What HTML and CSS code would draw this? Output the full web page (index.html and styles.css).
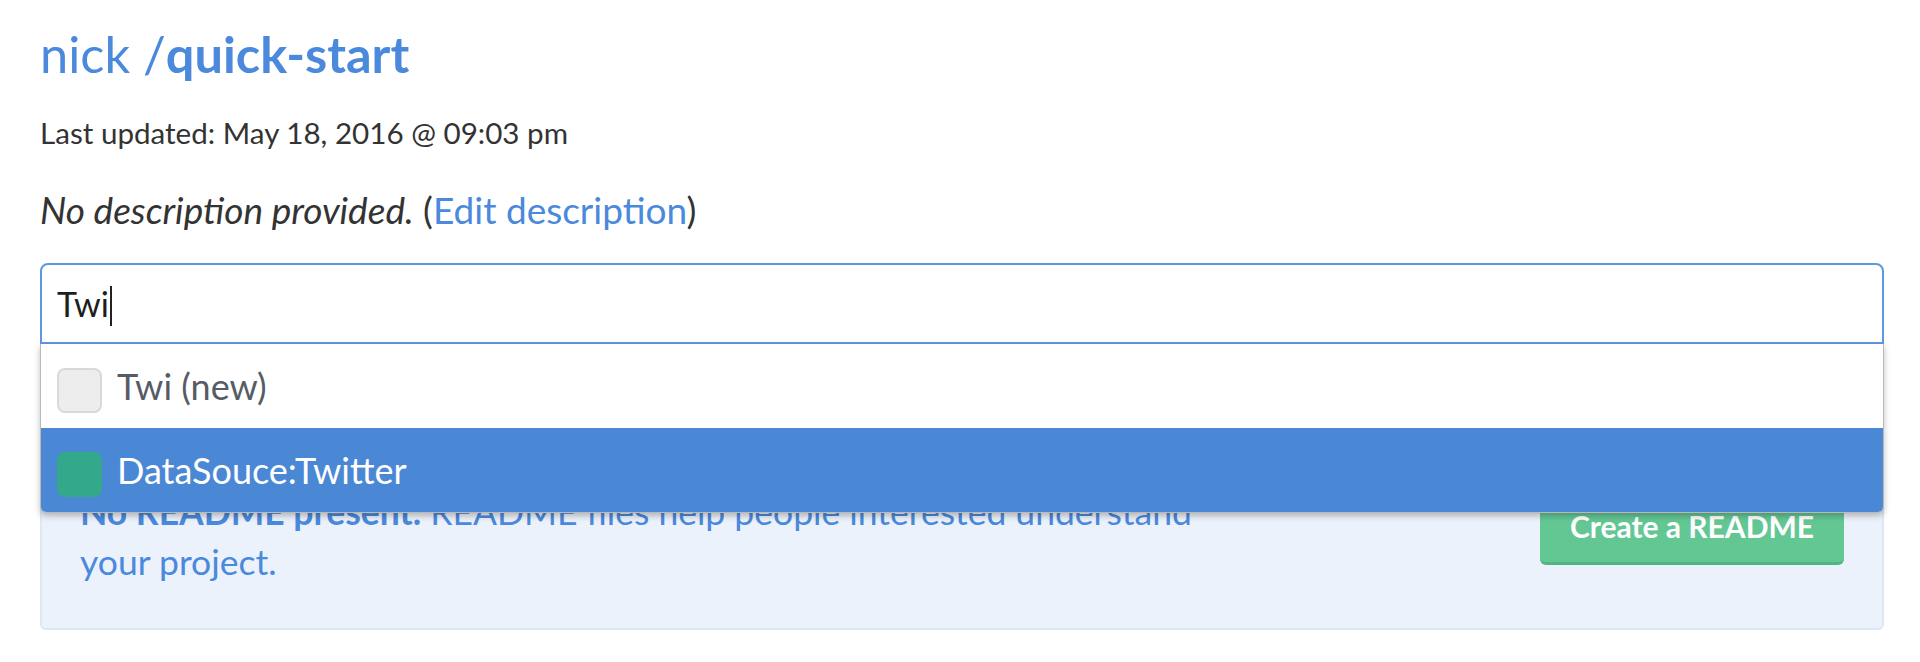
FILE: index.html
```html
<!DOCTYPE html>
<html lang="en">
<head>
<meta charset="utf-8">
<title>nick /quick-start</title>
<link rel="stylesheet" href="styles.css">
</head>
<body>
<main class="page">
  <h1 class="title"><span class="owner">nick /</span><span class="repo">quick-start</span></h1>
  <p class="updated">Last updated: May 18, 2016 @ 09:03 pm</p>
  <p class="desc"><em>No description provided.</em> (<a class="link" href="#">Edit description</a>)</p>

  <div class="tagbox">
    <div class="tag-input"><span class="typed">Twi</span><span class="caret"></span></div>
    <ul class="menu">
      <li class="option"><span class="swatch swatch-new"></span><span class="opt-label">Twi (new)</span></li>
      <li class="option active"><span class="swatch swatch-green"></span><span class="opt-label">DataSouce:Twitter</span></li>
    </ul>
  </div>

  <section class="readme">
    <p class="readme-text"><strong>No README present.</strong> README files help people interested understand your project.</p>
    <a class="btn-create" href="#">Create a README</a>
  </section>
</main>
</body>
</html>
```
FILE: styles.css
```css
* { box-sizing: border-box; }
html, body { margin: 0; padding: 0; background: #ffffff; }
body { font-family: Lato, "Open Sans", "Liberation Sans", sans-serif; color: #333333; }

.page {
  padding: 24px 36px 0 40px;
}

.title {
  margin: 0;
  font-size: 50.5px;
  line-height: 60px;
  font-weight: 400;
  color: #4a89dc;
}
.title .repo { font-weight: 700; }

.updated {
  margin: 31px 0 0;
  font-size: 29.6px;
  line-height: 36px;
  color: #333333;
}

.desc {
  margin: 37px 0 0;
  font-size: 37px;
  line-height: 44px;
  color: #333333;
}
.desc em { color: #333; }
.link { color: #4a89dc; text-decoration: none; }

.tagbox {
  position: relative;
  margin-top: 31px;
}
.tag-input {
  height: 81px;
  border: 2px solid #5d97e2;
  border-radius: 8px 8px 0 0;
  padding: 0 15px;
  display: flex;
  align-items: center;
  font-size: 34px;
  color: #1e1e1e;
}
.caret {
  display: inline-block;
  width: 2px;
  height: 40px;
  background: #222;
  margin-left: 1px;
  margin-top: 4px;
}

.menu {
  position: absolute;
  top: 100%;
  left: 0;
  right: 0;
  margin: 0;
  padding: 0;
  list-style: none;
  background: #ffffff;
  border: 1px solid #b9b9b9;
  border-top: 0;
  border-radius: 0 0 6px 6px;
  box-shadow: 0 3px 6px rgba(0, 0, 0, 0.25);
  overflow: hidden;
  z-index: 2;
}
.option {
  height: 84px;
  display: flex;
  align-items: center;
  gap: 15px;
  padding-left: 16px;
  font-size: 36px;
  color: #565c66;
}
.option.active {
  background: #4a88d6;
  color: #ffffff;
}
.swatch {
  width: 45px;
  height: 45px;
  border-radius: 8px;
  margin-top: 8px;
  flex: none;
}
.swatch-new { background: #ededed; border: 2px solid #d9d9d9; }
.swatch-green { background: #33a88b; }

.readme {
  margin-top: 103px;
  background: #ecf2fb;
  border: 2px solid #dce8f7;
  border-radius: 6px;
  padding: 38px 38px 41px 38px;
  display: flex;
  justify-content: space-between;
  align-items: flex-start;
}
.readme-text {
  margin: 0;
  max-width: 1150px;
  font-size: 35.5px;
  line-height: 50px;
  color: #4a89dc;
}
.btn-create {
  flex: none;
  display: block;
  width: 304px;
  margin-top: 3px;
  text-align: center;
  padding: 16px 0;
  background: #63c794;
  border-bottom: 3px solid #4fb681;
  border-radius: 6px;
  color: #ffffff;
  font-weight: 700;
  font-size: 30px;
  line-height: 40px;
  text-decoration: none;
}
```
